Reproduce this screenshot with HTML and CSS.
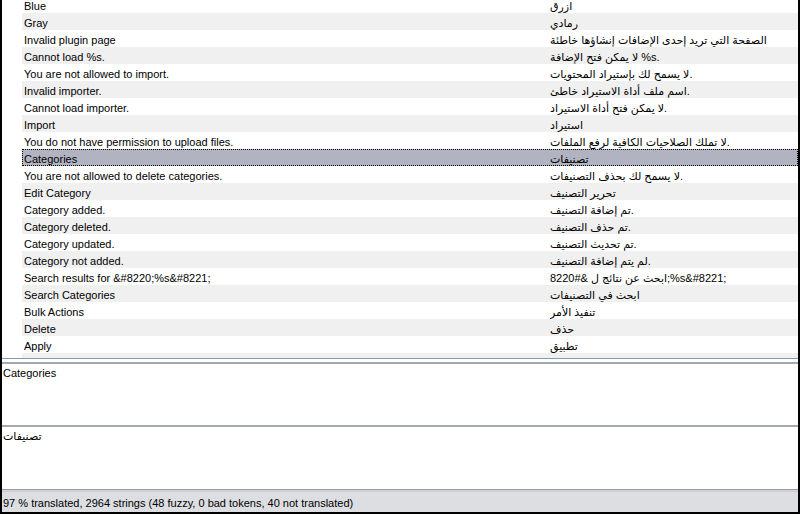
FILE: index.html
```html
<!DOCTYPE html>
<html lang="en">
<head>
    <meta charset="UTF-8">
    <title>Catalog Editor</title>
    <link rel="stylesheet" href="styles.css">
</head>
<body>
    <div class="app">
        <div class="list">
            <div class="list-body">
                <div class="row"><span class="src">Blue</span><span class="trans">ازرق</span></div>
                <div class="row"><span class="src">Gray</span><span class="trans">رمادي</span></div>
                <div class="row"><span class="src">Invalid plugin page</span><span class="trans">الصفحة التي تريد إحدى الإضافات إنشاؤها خاطئة</span></div>
                <div class="row"><span class="src">Cannot load %s.</span><span class="trans">لا يمكن فتح الإضافة %s.</span></div>
                <div class="row"><span class="src">You are not allowed to import.</span><span class="trans">لا يسمح لك بإستيراد المحتويات.</span></div>
                <div class="row"><span class="src">Invalid importer.</span><span class="trans">اسم ملف أداة الاستيراد خاطئ.</span></div>
                <div class="row"><span class="src">Cannot load importer.</span><span class="trans">لا يمكن فتح أداة الاستيراد.</span></div>
                <div class="row"><span class="src">Import</span><span class="trans">استيراد</span></div>
                <div class="row"><span class="src">You do not have permission to upload files.</span><span class="trans">لا تملك الصلاحيات الكافية لرفع الملفات.</span></div>
                <div class="row selected"><span class="src">Categories</span><span class="trans">تصنيفات</span></div>
                <div class="row"><span class="src">You are not allowed to delete categories.</span><span class="trans">لا يسمح لك بحذف التصنيفات.</span></div>
                <div class="row"><span class="src">Edit Category</span><span class="trans">تحرير التصنيف</span></div>
                <div class="row"><span class="src">Category added.</span><span class="trans">تم إضافة التصنيف.</span></div>
                <div class="row"><span class="src">Category deleted.</span><span class="trans">تم حذف التصنيف.</span></div>
                <div class="row"><span class="src">Category updated.</span><span class="trans">تم تحديث التصنيف.</span></div>
                <div class="row"><span class="src">Category not added.</span><span class="trans">لم يتم إضافة التصنيف.</span></div>
                <div class="row"><span class="src">Search results for &amp;#8220;%s&amp;#8221;</span><span class="trans">ابحث عن نتائج ل &amp;#8220;%s&amp;#8221;</span></div>
                <div class="row"><span class="src">Search Categories</span><span class="trans">ابحث في التصنيفات</span></div>
                <div class="row"><span class="src">Bulk Actions</span><span class="trans">تنفيذ الأمر</span></div>
                <div class="row"><span class="src">Delete</span><span class="trans">حذف</span></div>
                <div class="row"><span class="src">Apply</span><span class="trans">تطبيق</span></div>
                <div class="row"><span class="src"></span><span class="trans"></span></div>
            </div>
        </div>

        <div class="sash"></div>

        <div class="pane source">Categories</div>
        <div class="pane target">تصنيفات</div>

        <div class="status">97 % translated, 2964 strings (48 fuzzy, 0 bad tokens, 40 not translated)</div>
    </div>
</body>
</html>
```

FILE: styles.css
```css
* {
    margin: 0;
    padding: 0;
    box-sizing: border-box;
}

html, body {
    height: 100%;
}

body {
    font-family: 'Liberation Sans', 'DejaVu Sans', sans-serif;
    font-size: 11px;
    color: #000;
    background: #000;
    padding: 0 2px 3px 2px;
    overflow: hidden;
}

.app {
    display: flex;
    flex-direction: column;
    height: 100%;
    background: #fff;
}

/* string list */
.list {
    height: 359px;
    flex: none;
    overflow: hidden;
    border-bottom: 1px solid #7f9db9;
    padding-left: 20px;
}

.list-body {
    margin-top: -4px;
}

.row {
    display: grid;
    grid-template-columns: 526px 1fr;
    height: 17px;
    line-height: 14px;
    padding: 3px 0 0 2px;
    white-space: nowrap;
}

.row:nth-child(even) {
    background: #f0f0f0;
}

.row.selected {
    background: #b1b4c0;
    outline: 1px dotted #000;
    outline-offset: -1px;
}

.row .trans {
    overflow: hidden;
}

/* splitter between list and editors */
.sash {
    height: 3px;
    flex: none;
}

.pane {
    flex: none;
    border-top: 2px solid #a5a9ae;
    padding: 3px 1px 0;
    line-height: 13px;
}

.pane.source {
    height: 63px;
}

.pane.target {
    height: 64px;
}

.status {
    flex: 1;
    background: #dddee2;
    border-top: 1px solid #9b9ea3;
    box-shadow: inset 0 2px 0 #cfd0d4;
    padding: 5px 0 0 1px;
    line-height: 17px;
    white-space: nowrap;
}
```
